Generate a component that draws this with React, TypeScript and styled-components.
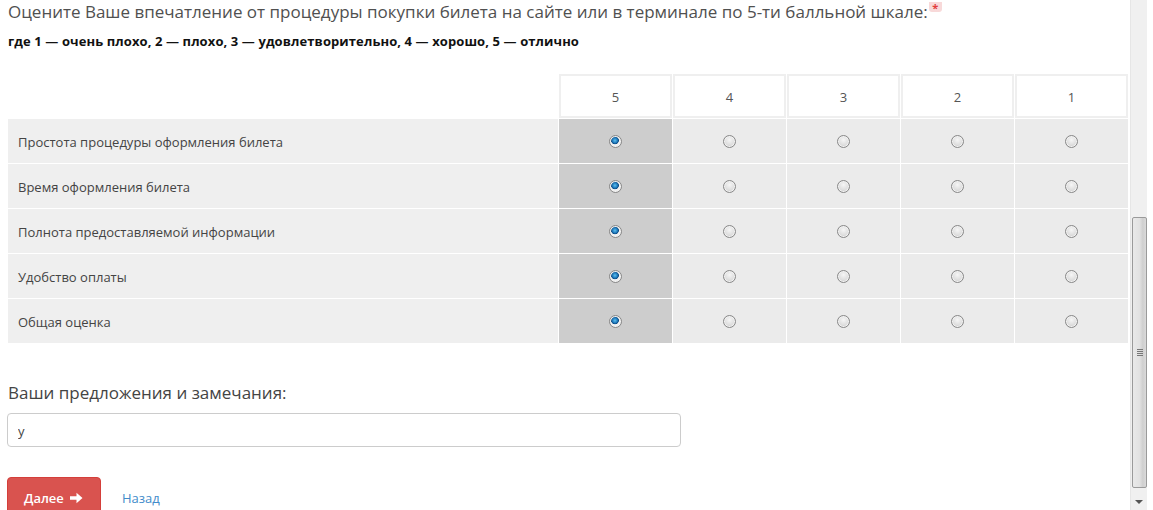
import styled, { createGlobalStyle } from "styled-components";

const FONT = `"Open Sans", "Noto Sans", "DejaVu Sans", sans-serif`;

const criteria = [
    "Простота процедуры оформления билета",
    "Время оформления билета",
    "Полнота предоставляемой информации",
    "Удобство оплаты",
    "Общая оценка",
];

const scores = [5, 4, 3, 2, 1];
const selected = 5;

const GlobalStyle = createGlobalStyle`
    html, body {
        margin: 0;
        padding: 0;
        background: #fff;
        overflow: hidden;
        height: 510px;
    }
    body {
        font-family: ${FONT};
        color: #444;
    }
`;

const Page = styled.div`
    position: relative;
    width: 1153px;
    height: 510px;
    overflow: hidden;
`;

const Content = styled.div`
    width: 1121px;
    padding: 2px 0 0 8px;
`;

const Title = styled.div`
    font-size: 17px;
    line-height: 20px;
    color: #505050;
`;

const Required = styled.span`
    display: inline-block;
    margin-left: 1px;
    width: 13px;
    height: 10px;
    border-radius: 0 0 3px 3px;
    background: #f8d9d9;
    color: #e23c3c;
    font-size: 11px;
    font-weight: bold;
    line-height: 12px;
    text-align: center;
    vertical-align: top;
`;

const Hint = styled.div`
    margin-top: 11px;
    font-size: 13px;
    font-weight: 700;
    line-height: 16px;
    color: #111;
    letter-spacing: 0.1px;
`;

const Grid = styled.div`
    margin-top: 25px;
    display: grid;
    grid-template-columns: 550px repeat(5, 113px);
    grid-auto-rows: 44px;
    gap: 1px;
`;

const Blank = styled.div``;

const HeadCell = styled.div`
    box-sizing: border-box;
    border: 2px solid #efefef;
    background: #fff;
    display: flex;
    align-items: center;
    justify-content: center;
    padding-top: 2px;
    font-size: 13px;
    color: #555;
`;

const Label = styled.div`
    background: #efefef;
    display: flex;
    align-items: center;
    padding: 2px 0 0 10px;
    font-size: 13px;
    color: #444;
`;

const Cell = styled.label<{ $active: boolean }>`
    background: ${(p) => (p.$active ? "#cdcdcd" : "#ebebeb")};
    display: flex;
    align-items: center;
    justify-content: center;
`;

const Radio = styled.input`
    appearance: none;
    margin: 0;
    width: 13px;
    height: 13px;
    border-radius: 50%;
    border: 1px solid #888;
    box-sizing: border-box;
    background: radial-gradient(circle at 50% 35%, #f6f6f6 0%, #dedede 55%, #bdbdbd 100%);
    box-shadow: inset 0 0 0 1px #f2f2f2;

    &:checked {
        background: radial-gradient(circle at 45% 40%, #5cc0f0 0%, #1b74b6 30%, #0b4a82 40%, #f4f4f4 47%, #d8d8d8 100%);
    }
`;

const Section = styled.div`
    margin-top: 40px;
    font-size: 17px;
    line-height: 20px;
    color: #444;
`;

const TextInput = styled.input`
    display: block;
    box-sizing: border-box;
    margin: 10px 0 0 -1px;
    width: 674px;
    height: 34px;
    padding: 2px 10px 0;
    border: 1px solid #ccc;
    border-radius: 4px;
    font-family: ${FONT};
    font-size: 13px;
    color: #444;
    outline: none;
`;

const Actions = styled.div`
    margin: 30px 0 0 -1px;
    display: flex;
    align-items: center;
    gap: 21px;
`;

const NextButton = styled.button`
    display: flex;
    align-items: center;
    gap: 6px;
    box-sizing: border-box;
    width: 94px;
    height: 38px;
    padding: 4px 0 0 16px;
    border: 1px solid #d43f3a;
    border-radius: 4px;
    background: #d9534f;
    color: #fff;
    font-family: ${FONT};
    font-size: 13px;
    font-weight: 600;
`;

const BackLink = styled.a`
    padding-top: 4px;
    font-size: 13px;
    color: #428bca;
    text-decoration: none;
`;

const Scrollbar = styled.div`
    position: absolute;
    top: 0;
    right: 6px;
    width: 17px;
    height: 510px;
    background: #f0f0f0;
    border-left: 1px solid #e6e6e6;
    box-sizing: border-box;
`;

const Thumb = styled.div`
    position: absolute;
    top: 217px;
    left: 1px;
    width: 15px;
    height: 271px;
    box-sizing: border-box;
    border: 1px solid #9a9a9a;
    border-radius: 2px;
    background: linear-gradient(to right, #e9e9e9 0%, #e2e2e2 50%, #cfcfcf 75%, #dadada 100%);
    display: flex;
    align-items: center;
    justify-content: center;
`;

const Grip = styled.div`
    width: 6px;
    height: 7px;
    background: repeating-linear-gradient(to bottom, #777 0 1px, transparent 1px 2px);
`;

const DownArrow = styled.div`
    position: absolute;
    bottom: 6px;
    left: 4px;
    width: 0;
    height: 0;
    border-left: 4px solid transparent;
    border-right: 4px solid transparent;
    border-top: 4px solid #555;
`;

function ArrowRight() {
    return (
        <svg width="13" height="12" viewBox="0 0 13 12">
            <path d="M0 4.2h6.5V0.8L12.5 6 6.5 11.2V7.8H0z" fill="#fff" />
        </svg>
    );
}

export default function App() {
    return (
        <Page>
            <GlobalStyle />
            <Content>
                <Title>
                    Оцените Ваше впечатление от процедуры покупки билета на сайте или в терминале по 5-ти балльной шкале:
                    <Required>*</Required>
                </Title>
                <Hint>где 1 — очень плохо, 2 — плохо, 3 — удовлетворительно, 4 — хорошо, 5 — отлично</Hint>
                <Grid>
                    <Blank />
                    {scores.map((s) => (
                        <HeadCell key={s}>{s}</HeadCell>
                    ))}
                    {criteria.map((c, row) => (
                        <>
                            <Label key={`l${row}`}>{c}</Label>
                            {scores.map((s) => (
                                <Cell key={`${row}-${s}`} $active={s === selected}>
                                    <Radio type="radio" name={`q${row}`} defaultChecked={s === selected} />
                                </Cell>
                            ))}
                        </>
                    ))}
                </Grid>
                <Section>Ваши предложения и замечания:</Section>
                <TextInput defaultValue="у" />
                <Actions>
                    <NextButton>
                        Далее <ArrowRight />
                    </NextButton>
                    <BackLink href="#">Назад</BackLink>
                </Actions>
            </Content>
            <Scrollbar>
                <Thumb>
                    <Grip />
                </Thumb>
                <DownArrow />
            </Scrollbar>
        </Page>
    );
}
